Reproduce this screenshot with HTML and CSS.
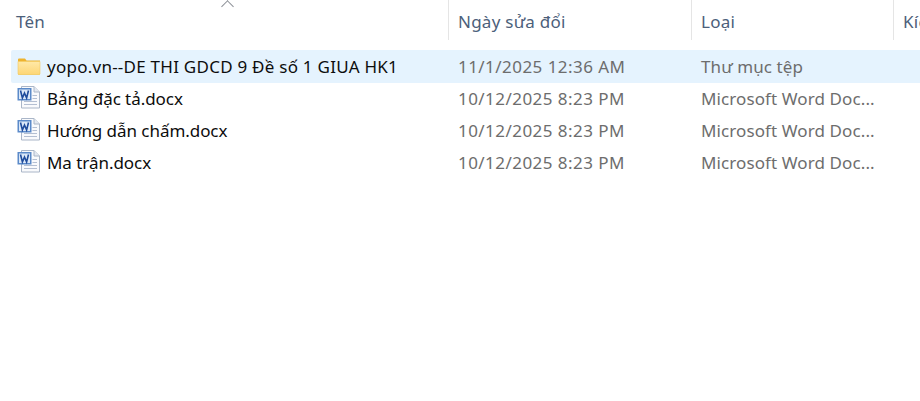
FILE: index.html
```html
<!DOCTYPE html>
<html>
<head>
  <meta charset="utf-8">
  <title>Thư mục</title>
  <link rel="stylesheet" href="styles.css">
</head>
<body>
  <svg width="0" height="0" class="defs">
    <defs>
      <linearGradient id="folderFill" x1="0" y1="0" x2="0" y2="1">
        <stop offset="0" stop-color="#ffe9a8"/>
        <stop offset="1" stop-color="#fdd675"/>
      </linearGradient>
      <symbol id="word" viewBox="0 0 24 24">
        <path d="M4.5 .5H17L22.5 6V22H4.5Z" fill="#f9fafc" stroke="#aab6c8"/>
        <path d="M17 .5V6H22.5" fill="#e3e8f0" stroke="#aab6c8"/>
        <path d="M15.5 9.5H20M15.5 12.5H20M7 15.5H20M7 18.5H20" stroke="#b4bfd2" fill="none"/>
        <rect x=".5" y="2" width="14" height="12.5" fill="#5b8ac9"/>
        <rect x="2" y="3.5" width="11" height="9.5" fill="#dbe8f8"/>
        <path d="M3.5 4.5L5.4 12L7.5 7L9.6 12L11.5 4.5" fill="none" stroke="#1f4c9c" stroke-width="1.6"/>
      </symbol>
      <symbol id="folder" viewBox="0 0 24 18">
        <path d="M1 1.5Q1 .5 2 .5H8L9.5 2.5H23V16.5H1Z" fill="#eeb32e"/>
        <path d="M1 3.5H23V15.5Q23 16.5 22 16.5H2Q1 16.5 1 15.5Z" fill="url(#folderFill)" stroke="#f4cb62" stroke-width=".6"/>
      </symbol>
    </defs>
  </svg>

  <div class="header">
    <div class="col-head name-head">Tên <span class="sort-arrow"></span></div>
    <div class="col-head">Ngày sửa đổi</div>
    <div class="col-head">Loại</div>
    <div class="col-head">Kích thước</div>
  </div>

  <div class="list">
    <div class="row selected">
      <div class="name"><svg class="icon-folder"><use href="#folder"/></svg>yopo.vn--DE THI GDCD 9 Đề số 1 GIUA HK1</div>
      <div class="cell date">11/1/2025 12:36 AM</div>
      <div class="cell">Thư mục tệp</div>
    </div>
    <div class="row">
      <div class="name"><svg class="icon-word"><use href="#word"/></svg>Bảng đặc tả.docx</div>
      <div class="cell date">10/12/2025 8:23 PM</div>
      <div class="cell">Microsoft Word Doc...</div>
    </div>
    <div class="row">
      <div class="name"><svg class="icon-word"><use href="#word"/></svg>Hướng dẫn chấm.docx</div>
      <div class="cell date">10/12/2025 8:23 PM</div>
      <div class="cell">Microsoft Word Doc...</div>
    </div>
    <div class="row">
      <div class="name"><svg class="icon-word"><use href="#word"/></svg>Ma trận.docx</div>
      <div class="cell date">10/12/2025 8:23 PM</div>
      <div class="cell">Microsoft Word Doc...</div>
    </div>
  </div>
</body>
</html>
```
FILE: styles.css
```css
html, body {
  margin: 0;
  padding: 0;
  height: 100%;
  overflow: hidden;
  background: #fff;
}

body {
  font-family: "Noto Sans", "Open Sans", sans-serif;
  font-size: 17px;
}

.defs {
  display: block;
  height: 0;
}

.header {
  display: grid;
  grid-template-columns: 449px 243px 202px 26px;
  height: 40px;
  overflow: hidden;
}

.col-head {
  position: relative;
  display: flex;
  align-items: center;
  height: 40px;
  padding: 3px 0 0 9px;
  box-sizing: border-box;
  border-right: 1px solid #e5e5e5;
  color: #4c607a;
  letter-spacing: 0.25px;
  white-space: nowrap;
  overflow: hidden;
}

.name-head {
  padding-left: 16px;
}

.col-head:last-child {
  border-right: 0;
}

.sort-arrow {
  position: absolute;
  left: 223px;
  top: 2px;
  width: 8px;
  height: 8px;
  border-left: 1px solid #8b8f96;
  border-top: 1px solid #8b8f96;
  transform: rotate(45deg);
}

.list {
  margin: 10px 0 0 11px;
}

.row {
  display: grid;
  grid-template-columns: 438px 243px 1fr;
  align-items: center;
  box-sizing: border-box;
  height: 32px;
  padding-bottom: 2px;
}

.row.selected {
  height: 33px;
  padding-bottom: 0;
  border-radius: 2px 0 0 2px;
  background: #e5f3fe;
}

.name {
  display: flex;
  align-items: center;
  gap: 6px;
  padding-left: 6px;
  color: #0d0d0d;
  letter-spacing: -0.05px;
  white-space: nowrap;
}

.selected .name {
  letter-spacing: 0.25px;
}

.cell {
  padding-left: 9px;
  color: #6d6d6d;
  letter-spacing: 0.1px;
  white-space: nowrap;
}

.cell.date {
  letter-spacing: 0.45px;
}

.icon-folder {
  width: 24px;
  height: 18px;
  flex: none;
}

.icon-word {
  width: 24px;
  height: 24px;
  flex: none;
}
```
